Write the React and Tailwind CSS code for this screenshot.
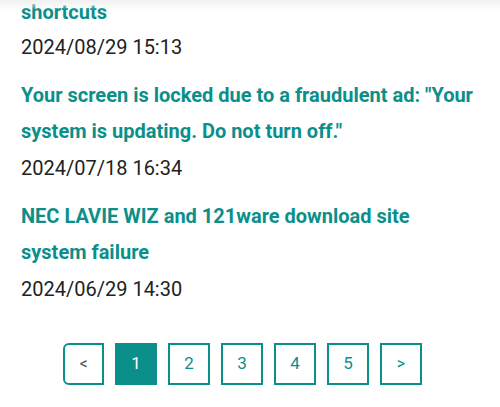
import React from 'react';

const news = [
  { title: 'shortcuts', date: '2024/08/29 15:13' },
  {
    title: 'Your screen is locked due to a fraudulent ad: "Your system is updating. Do not turn off."',
    date: '2024/07/18 16:34',
  },
  { title: 'NEC LAVIE WIZ and 121ware download site system failure', date: '2024/06/29 14:30' },
];

const pages = ['1', '2', '3', '4', '5'];

const App = () => {
  return (
    <div className="relative w-[500px] h-[407px] overflow-hidden bg-white" style={{ fontFamily: 'Roboto, "Liberation Sans", sans-serif' }}>
      <div className="pointer-events-none absolute inset-x-0 top-0 h-[10px] bg-gradient-to-b from-[#f0f0f0] to-white/0" />

      <ul className="-mt-[6px] pl-[21px] pr-[20px]">
        {news.map((item, i) => (
          <li key={item.date} className="mb-[16px]">
            <a href="#" className="block text-[20px] font-bold leading-[36px] text-[#0b8f8a]">
              {item.title}
            </a>
            <p className={i === 0 ? 'mt-[3px] text-[20px] leading-[28px] text-[#222]' : 'mt-[5px] text-[20px] leading-[28px] text-[#222]'}>
              {item.date}
            </p>
          </li>
        ))}
      </ul>

      <div className="mt-[40px] flex justify-center gap-[11px] pr-[15px]">
        <a href="#" className="flex h-[42px] w-[41px] items-center justify-center rounded-l-[6px] border-2 border-[#0b8f8a] text-[16px] text-[#555]">
          &lt;
        </a>
        {pages.map((p) => (
          <a
            key={p}
            href="#"
            className={
              p === '1'
                ? 'flex h-[42px] w-[42px] items-center justify-center border-2 border-[#0b8f8a] bg-[#0b8f8a] text-[17px] text-white'
                : 'flex h-[42px] w-[42px] items-center justify-center border-2 border-[#0b8f8a] text-[17px] text-[#0b8f8a]'
            }
          >
            {p}
          </a>
        ))}
        <a href="#" className="flex h-[42px] w-[42px] items-center justify-center border-2 border-[#0b8f8a] text-[16px] text-[#0b8f8a]">
          &gt;
        </a>
      </div>
    </div>
  );
};

export default App;
